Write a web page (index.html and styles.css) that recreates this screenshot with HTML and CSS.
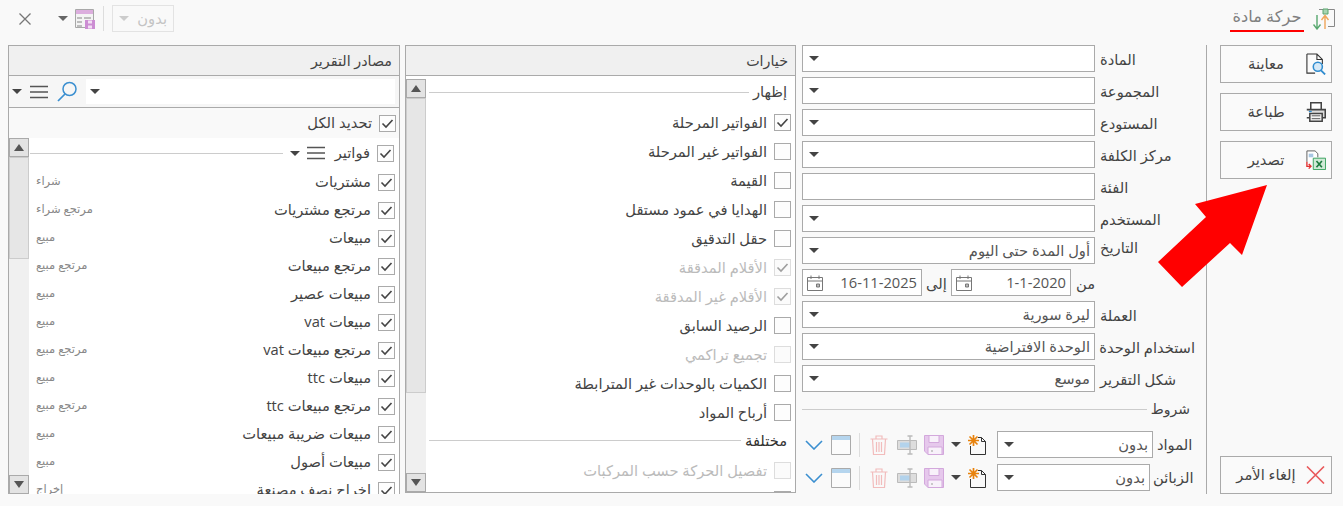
FILE: index.html
```html
<!DOCTYPE html>
<html lang="ar" dir="rtl">
<head>
<meta charset="utf-8">
<title>حركة مادة</title>
<link rel="stylesheet" href="styles.css">
</head>
<body>
<svg class="defs" width="0" height="0" aria-hidden="true">
  <defs>
    <symbol id="tick" viewBox="0 0 17 17"><path d="M3.5 8.5l3.5 3.5 6.500-7" fill="none" stroke="#444" stroke-width="1.600"/></symbol>
    <symbol id="burger" viewBox="0 0 18 14"><path d="M0 1.500h18M0 7h18M0 12.500h18" stroke="#555" stroke-width="1.300"/></symbol>
    <symbol id="cal" viewBox="0 0 16 16"><path d="M.5 2.500h15v13H.5zM.5 6h15M4 .5v3.500M12 .5v3.500" fill="none" stroke="#777" stroke-width="1"/><path d="M9.500 9h3v3h-3z" fill="#bbb" stroke="#777"/></symbol>
    <symbol id="new" viewBox="0 0 18 20"><path d="M10 2.500h3.500l4 4v13H2.500V11" fill="none" stroke="#333" stroke-width="1"/><path d="M13.500 2.500v4h4" fill="none" stroke="#333"/><path d="M5.500 0v11M0 5.500h11M1.500 1.500l8 8M9.500 1.500l-8 8" stroke="#e8820c" stroke-width="1.700"/></symbol>
    <symbol id="save" viewBox="0 0 20 20"><path d="M.5.5h19v19H4L.5 16z" fill="#e6c8ec" stroke="#d3a8dc"/><path d="M5 .5h10v7H5zM4 12h14v7.500H4z" fill="#f8f1fa" stroke="#d3a8dc"/><path d="M7 15h2v2H7z" fill="#c9c9c9"/></symbol>
    <symbol id="rename" viewBox="0 0 20 20"><path d="M.5 5.500h19v9H.5z" fill="#ddd" stroke="#bbb"/><path d="M3 7.500h10v5H3z" fill="#b3d3ec"/><path d="M13 1v18M10.500 1h5M10.500 19h5" stroke="#bbb" stroke-width="1.400" fill="none"/></symbol>
    <symbol id="trash" viewBox="0 0 18 20"><path d="M.5 4h17M6 4V1h6v3M2.500 4l1 15.500h11l1-15.500M6.500 7v10M9 7v10M11.500 7v10" fill="none" stroke="#f2bcbc" stroke-width="1.200"/></symbol>
    <symbol id="win" viewBox="0 0 20 20"><path d="M.5.5h19v19H.5z" fill="#fbfbfb" stroke="#aaa"/><path d="M1 1h18v4H1z" fill="#b5d5ee"/></symbol>
    <symbol id="chev" viewBox="0 0 18 10"><path d="M1 1l8 8 8-8" fill="none" stroke="#3b8fd0" stroke-width="1.600"/></symbol>
  </defs>
</svg>

<header class="topbar">
  <div class="title-block">
    <svg class="title-icon" width="22" height="22" viewBox="0 0 22 22"><path d="M6 1.500h15.500v17H15" fill="none" stroke="#888"/><path d="M10 1h5v5h-5z" fill="#a7d5b2" stroke="#5aa46e"/><path d="M4 7v14M.5 16.500L4 21l3.500-4.500" fill="none" stroke="#58a86f" stroke-width="1.400"/><path d="M12 21V8M8.500 12L12 7.500l3.500 4.500" fill="none" stroke="#f0a65a" stroke-width="1.400"/></svg>
    <span class="title">حركة مادة</span>
  </div>
  <div class="top-tools">
    <div class="mini-combo"><span class="mini-text">بدون</span><i class="caret caret-faint"></i></div>
    <span class="tool-sep"></span>
    <svg width="20" height="20" viewBox="0 0 20 20"><path d="M.5.5h18v18H.5z" fill="#f4f4f4" stroke="#a8a8a8"/><path d="M1 1h17v4H1z" fill="#dcaede"/><path d="M2 8h5v2H2zM2 12h5v2H2zM2 16h5v2H2zM9 8h7v2H9z" fill="#bdbdbd"/><path d="M10 11h10v9H10z" fill="#cc8dd3"/><path d="M13 11.500h4v3h-4zM13 16.500h4v3h-4z" fill="#f2dff3"/></svg>
    <i class="caret caret-grey"></i>
    <svg class="close" width="12" height="12" viewBox="0 0 12 12"><path d="M.5.5l11 11M11.500.5l-11 11" stroke="#777" stroke-width="1.300"/></svg>
  </div>
</header>

<main class="content">
  <aside class="actions">
    <div class="action-stack">
      <button class="action">
        <svg width="20" height="22" viewBox="0 0 22 24"><path d="M1 1h11l6 6v5M12 1v6h6M1 1v21h9" fill="none" stroke="#333" stroke-width="1.200"/><circle cx="13" cy="15" r="5" fill="#d6e9f7" stroke="#2f8ccf" stroke-width="1.700"/><path d="M16.500 19l4.500 4.500" stroke="#2f8ccf" stroke-width="2"/></svg>
        <span>معاينة</span>
      </button>
      <button class="action">
        <svg width="20" height="20" viewBox="0 0 21 21"><path d="M5 8V.8h11V8" fill="#fff" stroke="#444" stroke-width="1.600"/><path d="M.8 8h19.400v8.500H17M4 16.500H.8z" fill="#ddd" stroke="#444" stroke-width="1.600"/><path d="M4 12h13v8.200H4z" fill="#f4f4f4" stroke="#444" stroke-width="1.600"/><path d="M6 14.500h9M6 17.500h9" stroke="#555"/><path d="M3 10h3" stroke="#2f8ccf" stroke-width="1.400"/></svg>
        <span>طباعة</span>
      </button>
      <button class="action">
        <svg width="20" height="20" viewBox="0 0 22 22"><path d="M1 13V1h9l3 3v4" fill="#fff" stroke="#555"/><path d="M3 4h5v4H3z" fill="#a8c7e3"/><path d="M8 9h13.500v12.500H8z" fill="#cfe9d6" stroke="#2f9e57"/><path d="M11.500 12l6 7M17.500 12l-6 7" stroke="#1d7a3e" stroke-width="1.800"/><path d="M1 13v5h4M3 15.500L5.500 18 3 20.500" fill="none" stroke="#e23030" stroke-width="1.500"/></svg>
        <span>تصدير</span>
      </button>
    </div>
    <button class="action">
      <svg width="20" height="18" viewBox="0 0 20 18"><path d="M1 .5l17 17M18 .5L1 17.500" stroke="#e9595b" stroke-width="1.600"/></svg>
      <span>إلغاء الأمر</span>
    </button>
  </aside>

  <section class="form">
    <div class="frow"><label>المادة</label><div class="combo"><i class="caret"></i></div></div>
    <div class="frow"><label>المجموعة</label><div class="combo"><i class="caret"></i></div></div>
    <div class="frow"><label>المستودع</label><div class="combo"><i class="caret"></i></div></div>
    <div class="frow"><label>مركز الكلفة</label><div class="combo"><i class="caret"></i></div></div>
    <div class="frow"><label>الفئة</label><div class="combo"></div></div>
    <div class="frow"><label>المستخدم</label><div class="combo"><i class="caret"></i></div></div>
    <div class="frow"><label class="lift">التاريخ</label><div class="combo"><span>أول المدة حتى اليوم</span><i class="caret"></i></div></div>
    <div class="frow date-row">
      <label class="from">من</label>
      <div class="date"><span dir="ltr">1-1-2020</span><svg width="16" height="16"><use href="#cal"/></svg></div>
      <label class="to">إلى</label>
      <div class="date"><span dir="ltr">16-11-2025</span><svg width="16" height="16"><use href="#cal"/></svg></div>
    </div>
    <div class="frow"><label>العملة</label><div class="combo"><span>ليرة سورية</span><i class="caret"></i></div></div>
    <div class="frow"><label>استخدام الوحدة</label><div class="combo"><span>الوحدة الافتراضية</span><i class="caret"></i></div></div>
    <div class="frow"><label>شكل التقرير</label><div class="combo"><span>موسع</span><i class="caret"></i></div></div>

    <div class="legend form-legend"><span>شروط</span><i></i></div>

    <div class="crow">
      <label>المواد</label>
      <div class="combo"><span>بدون</span><i class="caret"></i></div>
      <div class="cond-tools">
        <svg width="18" height="20"><use href="#new"/></svg><i class="caret"></i>
        <svg width="20" height="20"><use href="#save"/></svg>
        <svg class="t-rename" width="20" height="20"><use href="#rename"/></svg>
        <svg class="t-trash" width="18" height="20"><use href="#trash"/></svg>
        <span class="tool-sep sep-c"></span>
        <svg class="t-win" width="20" height="20"><use href="#win"/></svg>
        <svg width="18" height="10"><use href="#chev"/></svg>
      </div>
    </div>
    <div class="crow">
      <label class="wide">الزبائن</label>
      <div class="combo"><span>بدون</span><i class="caret"></i></div>
      <div class="cond-tools">
        <svg width="18" height="20"><use href="#new"/></svg><i class="caret"></i>
        <svg width="20" height="20"><use href="#save"/></svg>
        <svg class="t-rename" width="20" height="20"><use href="#rename"/></svg>
        <svg class="t-trash" width="18" height="20"><use href="#trash"/></svg>
        <span class="tool-sep sep-c"></span>
        <svg class="t-win" width="20" height="20"><use href="#win"/></svg>
        <svg width="18" height="10"><use href="#chev"/></svg>
      </div>
    </div>
  </section>

  <section class="panel panel-options">
    <h2 class="phead">خيارات</h2>
    <div class="pbody">
      <div class="scrollbar sb-inset"><b class="sb-btn"><i class="tri-up"></i></b><b class="sb-thumb thumb-long"></b><b class="sb-track"></b><b class="sb-btn"><i class="tri-down"></i></b></div>
      <div class="opts">
        <div class="legend opt-legend"><span>إظهار</span><i></i></div>
        <div class="opt"><span class="cb"><svg width="17" height="17"><use href="#tick"/></svg></span>الفواتير المرحلة</div>
        <div class="opt"><span class="cb"></span>الفواتير غير المرحلة</div>
        <div class="opt"><span class="cb"></span>القيمة</div>
        <div class="opt"><span class="cb"></span>الهدايا في عمود مستقل</div>
        <div class="opt"><span class="cb"></span>حقل التدقيق</div>
        <div class="opt off"><span class="cb"><svg width="17" height="17"><use href="#tick"/></svg></span>الأقلام المدققة</div>
        <div class="opt off"><span class="cb"><svg width="17" height="17"><use href="#tick"/></svg></span>الأقلام غير المدققة</div>
        <div class="opt"><span class="cb"></span>الرصيد السابق</div>
        <div class="opt off"><span class="cb"></span>تجميع تراكمي</div>
        <div class="opt"><span class="cb"></span>الكميات بالوحدات غير المترابطة</div>
        <div class="opt"><span class="cb"></span>أرباح المواد</div>
        <div class="legend opt-legend2"><span>مختلفة</span><i></i></div>
        <div class="opt off"><span class="cb"></span>تفصيل الحركة حسب المركبات</div>
        <div class="opt"><span class="cb"></span>&nbsp;</div>
      </div>
    </div>
  </section>

  <section class="panel panel-sources">
    <h2 class="phead">مصادر التقرير</h2>
    <div class="search-bar">
      <div class="search-input"><i class="caret"></i></div>
      <svg width="22" height="24" viewBox="0 0 22 24"><circle cx="13.500" cy="9" r="6.500" fill="none" stroke="#3b8fd0" stroke-width="1.500"/><path d="M9 14l-7 7" stroke="#3b8fd0" stroke-width="1.700"/></svg>
      <svg width="18" height="14"><use href="#burger"/></svg>
      <i class="caret"></i>
    </div>
    <div class="select-all"><span class="cb"><svg width="17" height="17"><use href="#tick"/></svg></span>تحديد الكل</div>
    <div class="pbody">
      <div class="scrollbar"><b class="sb-btn"><i class="tri-up"></i></b><b class="sb-thumb thumb-short"></b><b class="sb-track"></b><b class="sb-btn"><i class="tri-down"></i></b></div>
      <div class="srcs">
        <div class="group"><span class="cb"><svg width="17" height="17"><use href="#tick"/></svg></span><span class="group-name">فواتير</span><svg width="18" height="14"><use href="#burger"/></svg><i class="caret"></i><i class="rule"></i></div>
        <div class="src"><span class="cb"><svg width="17" height="17"><use href="#tick"/></svg></span><span>مشتريات</span><small>شراء</small></div>
        <div class="src"><span class="cb"><svg width="17" height="17"><use href="#tick"/></svg></span><span>مرتجع مشتريات</span><small>مرتجع شراء</small></div>
        <div class="src"><span class="cb"><svg width="17" height="17"><use href="#tick"/></svg></span><span>مبيعات</span><small>مبيع</small></div>
        <div class="src"><span class="cb"><svg width="17" height="17"><use href="#tick"/></svg></span><span>مرتجع مبيعات</span><small>مرتجع مبيع</small></div>
        <div class="src"><span class="cb"><svg width="17" height="17"><use href="#tick"/></svg></span><span>مبيعات عصير</span><small>مبيع</small></div>
        <div class="src"><span class="cb"><svg width="17" height="17"><use href="#tick"/></svg></span><span>مبيعات vat</span><small>مبيع</small></div>
        <div class="src"><span class="cb"><svg width="17" height="17"><use href="#tick"/></svg></span><span>مرتجع مبيعات vat</span><small>مرتجع مبيع</small></div>
        <div class="src"><span class="cb"><svg width="17" height="17"><use href="#tick"/></svg></span><span>مبيعات ttc</span><small>مبيع</small></div>
        <div class="src"><span class="cb"><svg width="17" height="17"><use href="#tick"/></svg></span><span>مرتجع مبيعات ttc</span><small>مرتجع مبيع</small></div>
        <div class="src"><span class="cb"><svg width="17" height="17"><use href="#tick"/></svg></span><span>مبيعات ضريبة مبيعات</span><small>مبيع</small></div>
        <div class="src"><span class="cb"><svg width="17" height="17"><use href="#tick"/></svg></span><span>مبيعات أصول</span><small>مبيع</small></div>
        <div class="src"><span class="cb"><svg width="17" height="17"><use href="#tick"/></svg></span><span>إخراج نصف مصنعة</span><small>إخراج</small></div>
      </div>
    </div>
  </section>
</main>

<svg class="arrow" width="110" height="103" viewBox="0 0 110 103"><path d="M109 0L84 70 72 58 24 102 0 77 48 32 37 19z" fill="#ff0000"/></svg>
</body>
</html>
```
FILE: styles.css
```css
* { box-sizing: border-box; }
html, body { margin: 0; height: 506px; overflow: hidden; }
body {
  background: #f9f9f9;
  color: #444;
  font-family: "Open Sans", "Noto Sans", "DejaVu Sans", sans-serif;
  font-size: 14.7px;
  line-height: 1.2;
  position: relative;
}
.defs { position: absolute; }
svg { display: block; flex: none; }

.topbar {
  height: 45px;
  display: flex;
  justify-content: space-between;
  align-items: flex-start;
  padding: 5px 8px 0 19px;
}
.title-block { display: flex; align-items: flex-start; gap: 9px; padding-top: 3px; }
.title {
  width: 74px;
  height: 25px;
  text-align: center;
  color: #808080;
  font-size: 16.2px;
  border-bottom: 2px solid #f00;
  white-space: nowrap;
  margin-top: -1px;
}
.top-tools { display: flex; align-items: center; height: 27px; }
.mini-combo {
  width: 62px; height: 27px;
  border: 1px solid #e3e3e3;
  display: flex; align-items: center; justify-content: space-between;
  padding: 0 6px 0 6px;
  color: #c4c4c4;
}
.tool-sep { width: 1px; height: 25px; background: #ddd; margin: 0 8px; flex: none; }
.close { margin-right: 27px; }
.top-tools .caret-grey { margin-right: 7px; }

.caret { display: block; width: 0; height: 0; flex: none; border: 5px solid transparent; border-bottom: 0; border-top: 5px solid #444; }
.caret-faint { border-top-color: #ccc; }
.caret-grey { border-top-color: #666; }

.content { display: flex; padding: 0 11px 0 8px; height: 449px; }

.actions {
  width: 126px;
  margin-left: 11px;
  padding-left: 14px;
  border-left: 1px solid #aaa;
  height: 449px;
  flex: none;
  display: flex;
  flex-direction: column;
  justify-content: space-between;
}
.action-stack { display: flex; flex-direction: column; gap: 10px; }
.action {
  width: 112px; height: 38px;
  background: #fafafa;
  border: 1px solid #aaa;
  display: flex; align-items: center;
  padding: 0 5px 0 0;
  font: inherit;
  color: #444;
}
.action span { flex: 1; text-align: center; padding-left: 5px; white-space: nowrap; }

.form { width: 393px; flex: none; margin-left: 6px; }
.frow { display: flex; height: 27px; margin-bottom: 5px; }
.frow label { width: 100px; flex: none; padding-left: 5px; text-align: left; white-space: nowrap; line-height: 28px; }
.frow label.lift { line-height: 20px; }
.combo {
  flex: 1;
  min-width: 0;
  height: 27px;
  background: #fff;
  border: 1px solid #aaa;
  display: flex; align-items: center; justify-content: space-between;
  padding: 0 4px 0 6px;
  color: #555;
}
.combo .caret { margin-right: auto; }
.date-row label.from { width: 124px; padding-left: 5px; }
.date-row label.to { width: 29px; padding: 0; text-align: center; }
.date {
  width: 120px; height: 27px;
  background: #fff;
  border: 1px solid #aaa;
  display: flex; align-items: center; justify-content: space-between;
  padding: 0 4px;
  color: #555;
}

.legend { display: flex; align-items: center; gap: 4px; }
.legend i { flex: 1; height: 1px; background: #ccc; }
.form-legend { height: 25px; margin-top: 1px; margin-bottom: 9px; padding-right: 5px; font-size: 14px; }

.crow { display: flex; align-items: center; height: 27px; margin-bottom: 6px; }
.crow label { width: 42px; flex: none; text-align: left; padding-left: 4px; white-space: nowrap; }
.crow label.wide { width: 45px; padding-left: 3px; }
.crow label + .combo { flex: 1 0 0; }
.cond-tools { flex: none; width: 195px; display: flex; align-items: center; gap: 7px; padding-right: 11px; }
.t-rename { margin-left: 2px; }
.t-trash { margin-left: 3px; }
.t-win { margin-left: 1px; }
.sep-c { margin: 0 0 0 1px; height: 24px; }

.panel {
  border: 1px solid #aaa;
  height: 448px;
  display: flex; flex-direction: column;
  flex: none;
  background: #f9f9f9;
}
.panel-options { width: 391px; margin-left: 5px; }
.panel-sources { width: 392px; height: 449px; border-bottom: 0; }
.phead {
  margin: 0;
  height: 30px; flex: none;
  background: #f0f0f0;
  border-bottom: 1px solid #aaa;
  font-size: 14.3px; font-weight: 400;
  line-height: 29px;
  padding: 0 7px;
  color: #444;
}
.pbody { flex: 1; min-height: 0; display: flex; flex-direction: row-reverse; background: #fff; overflow: hidden; }

.scrollbar { width: 20px; flex: none; display: flex; flex-direction: column; }
.sb-inset { margin-top: 3px; }
.sb-btn { height: 19px; flex: none; background: #e3e3e3; border: 1px solid #aaa; display: flex; align-items: center; justify-content: center; }
.sb-thumb { flex: none; background: #e6e6e6; border: 1px solid #ccc; }
.sb-track { flex: 1; background: #f0f0f0; }
.thumb-long { height: 295px; }
.thumb-short { height: 102px; }
.tri-up { width: 0; height: 0; border: 5px solid transparent; border-top: 0; border-bottom: 7px solid #555; }
.tri-down { width: 0; height: 0; border: 5px solid transparent; border-bottom: 0; border-top: 7px solid #555; }

.opts { flex: 1; min-width: 0; padding: 3px 4px 0 3px; }
.opt-legend { height: 29px; padding: 0 4px 3px 0; }
.opt-legend2 { height: 29px; padding: 0 4px 2px 0; color: #333; }
.opt { height: 29px; display: flex; align-items: center; gap: 7px; color: #444; white-space: nowrap; }
.opt.off { color: #bbb; }
.opt.off .cb { border-color: #ddd; background: #fbfbfb; }
.opt.off .cb svg { opacity: .5; }

.cb { width: 17px; height: 17px; flex: none; border: 1px solid #aaa; background: #fdfdfd; display: block; }
.cb svg { margin: -1px; }

.search-bar {
  height: 32px; flex: none;
  border-bottom: 1px solid #aaa;
  display: flex; align-items: center;
  padding: 0 4px 0 3px;
  gap: 8px;
  background: #f6f6f6;
}
.search-input { flex: 1; height: 25px; background: #fff; display: flex; align-items: center; justify-content: flex-end; padding-left: 4px; }
.select-all { height: 30px; flex: none; display: flex; align-items: center; gap: 7px; padding-right: 3px; background: #f9f9f9; }

.srcs { flex: 1; min-width: 0; padding-right: 4px; }
.group { height: 30px; display: flex; align-items: center; gap: 7px; padding-right: 1px; }
.group-name { margin-left: 3px; }
.group .rule { flex: 1; height: 1px; background: #ccc; margin-left: 1px; }
.src { height: 28px; display: flex; align-items: center; gap: 7px; color: #444; }
.src span:nth-child(2) { flex: 1; white-space: nowrap; }
.src small { width: 60px; margin-left: 7px; font-size: 11.5px; color: #888; text-align: left; white-space: nowrap; margin-top: -3px; }

.arrow { position: absolute; left: 1158px; top: 185px; }
```
